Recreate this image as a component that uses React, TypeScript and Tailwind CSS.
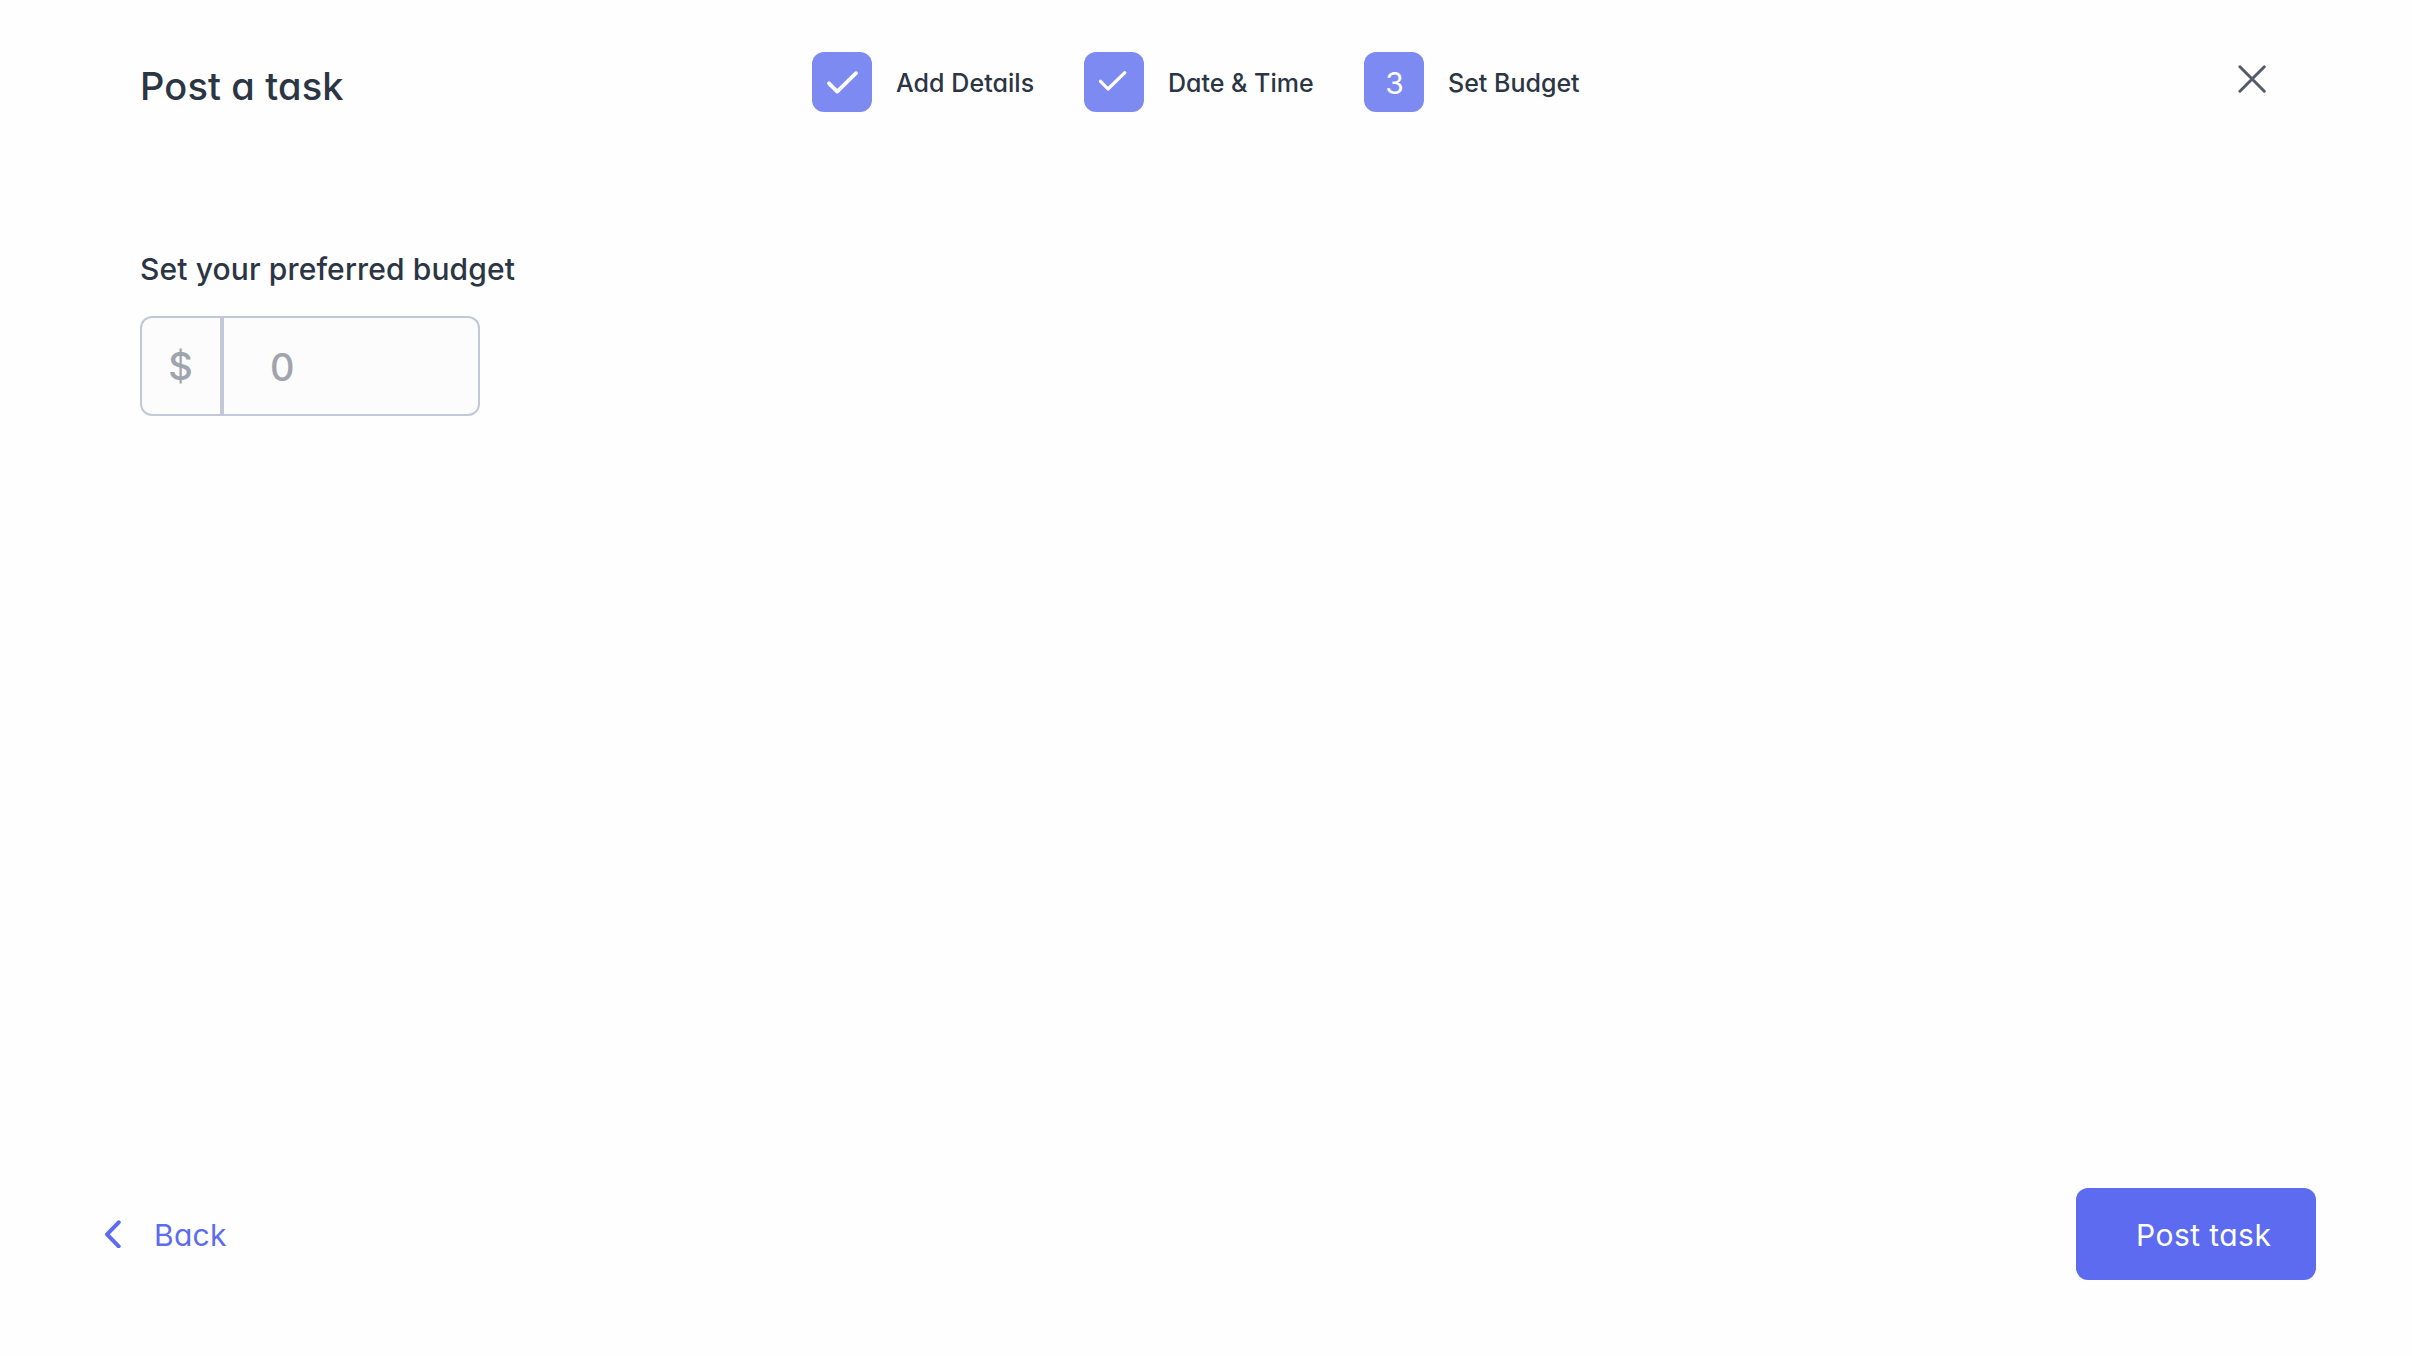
import { useState } from "react";

const steps = [
  { id: 1, label: "Add Details", check: "M17 31.3L25.2 39.6L44 21.2", stroke: 3.8, width: "w-[272px]", tracking: "tracking-[0.05px]" },
  { id: 2, label: "Date & Time", check: "M16.5 29.3L24 37L40.8 20.6", stroke: 3.2, width: "w-[280px]", tracking: "tracking-normal" },
  { id: 3, label: "Set Budget", check: "", stroke: 0, width: "", tracking: "tracking-normal" },
];

export default function App() {
  const [budget, setBudget] = useState("");

  return (
    <div className="flex h-screen flex-col bg-[#fefefe] font-['Inter','Open_Sans',sans-serif] text-[#2b3544] [font-feature-settings:'cv11']">
      <header className="flex items-start pt-[52px] pr-[146px] pl-[140px]">
        <h1 className="mt-1 w-[672px] text-[38px] leading-[60px] font-[450] tracking-[0.15px]">Post a task</h1>
        <div className="flex">
          {steps.map((step) => (
            <div key={step.id} className={`flex items-center gap-6 ${step.width}`}>
              <div className="flex h-[60px] w-[60px] items-center justify-center rounded-xl bg-[#7c8af1] text-white">
                {step.check ? (
                  <svg viewBox="0 0 60 60" fill="none" stroke="currentColor" strokeWidth={step.stroke} strokeLinecap="round" strokeLinejoin="round" className="h-[60px] w-[60px]">
                    <path d={step.check} />
                  </svg>
                ) : (
                  <span className="pt-0.5 pl-px text-[30px] leading-10">{step.id}</span>
                )}
              </div>
              <span className={`pt-0.5 text-[25px] leading-8 font-[450] whitespace-nowrap ${step.tracking}`}>{step.label}</span>
            </div>
          ))}
        </div>
        <button className="mt-[13px] ml-auto cursor-pointer text-[#555c69]" aria-label="Close">
          <svg viewBox="0 0 28 28" fill="none" stroke="currentColor" strokeWidth="3" strokeLinecap="round" className="h-7 w-7">
            <path d="M1.9 1.8L26.3 26.2M26.3 1.8L1.9 26.2" />
          </svg>
        </button>
      </header>

      <main className="px-[140px] pt-[133px]">
        <label htmlFor="budget" className="block text-[30px] leading-10 font-medium tracking-[0.13px]">
          Set your preferred budget
        </label>
        <div className="mt-[27px] flex h-[100px] w-[340px] overflow-hidden rounded-xl border-2 border-[#c2c8d8] bg-[#fcfcfc] text-[38px] font-[450] text-[#9fa4af]">
          <div className="flex w-[82px] shrink-0 items-center justify-center border-r-4 border-[#c2c8d8] pr-px">$</div>
          <input
            id="budget"
            value={budget}
            onChange={(e) => setBudget(e.target.value)}
            placeholder="0"
            className="w-full min-w-0 bg-transparent pt-0.5 pl-[46px] outline-none placeholder:text-[#9fa4af]"
          />
        </div>
      </main>

      <footer className="mt-auto flex items-center justify-between pr-24 pb-[76px] pl-[104px]">
        <button className="flex cursor-pointer items-center text-[#5c6bf0]">
          <svg viewBox="0 0 18 28" fill="none" stroke="currentColor" strokeWidth="4" strokeLinecap="round" strokeLinejoin="round" className="h-7 w-[18px]">
            <path d="M14.7 2.3L3 14.3L14.7 26.3" />
          </svg>
          <span className="pt-0.5 pl-8 text-[30px] leading-10 font-[430] tracking-[0.25px]">Back</span>
        </button>
        <button className="flex h-[92px] w-60 cursor-pointer items-center rounded-xl bg-[#5c6bf0] pt-0.5 pl-[60px] text-[30px] font-[420] tracking-[0.45px] whitespace-nowrap text-white">
          Post task
        </button>
      </footer>
    </div>
  );
}
